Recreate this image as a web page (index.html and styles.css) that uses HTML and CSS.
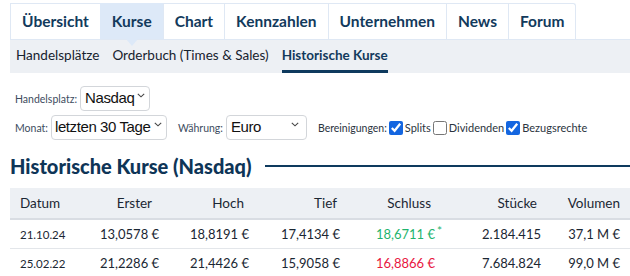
FILE: index.html
```html
<!DOCTYPE html>
<html lang="de">
<head>
    <meta charset="UTF-8">
    <meta name="viewport" content="width=device-width, initial-scale=1.0">
    <title>Historische Kurse</title>
    <link rel="stylesheet" href="styles.css">
</head>
<body>

    <div class="page">
        <ul class="tabs">
            <li><a href="#">Übersicht</a></li>
            <li class="active"><a href="#">Kurse</a></li>
            <li><a href="#">Chart</a></li>
            <li><a href="#">Kennzahlen</a></li>
            <li><a href="#">Unternehmen</a></li>
            <li><a href="#">News</a></li>
            <li><a href="#">Forum</a></li>
        </ul>

        <div class="subnav">
            <a href="#">Handelsplätze</a>
            <a href="#">Orderbuch (Times &amp; Sales)</a>
            <a href="#" class="current">Historische Kurse</a>
        </div>

        <div class="filters">
            <div class="filter-row">
                <label>Handelsplatz:</label>
                <span class="sel sel-platz">
                    <span class="sel-text">Nasdaq</span>
                    <svg class="chev" width="8" height="5" viewBox="0 0 8 5"><path d="M0.8 0.8 L4 3.8 L7.2 0.8" fill="none" stroke="#444" stroke-width="1.1"/></svg>
                </span>
            </div>
            <div class="filter-row">
                <label>Monat:</label>
                <span class="sel sel-monat">
                    <span class="sel-text">letzten 30 Tage</span>
                    <svg class="chev" width="8" height="5" viewBox="0 0 8 5"><path d="M0.8 0.8 L4 3.8 L7.2 0.8" fill="none" stroke="#444" stroke-width="1.1"/></svg>
                </span>
                <label class="gap">Währung:</label>
                <span class="sel sel-euro">
                    <span class="sel-text">Euro</span>
                    <svg class="chev" width="8" height="5" viewBox="0 0 8 5"><path d="M0.8 0.8 L4 3.8 L7.2 0.8" fill="none" stroke="#444" stroke-width="1.1"/></svg>
                </span>
                <span class="bereinigung gap">
                    <span class="b-label">Bereinigungen:</span>
                    <input type="checkbox" id="splits" checked><label for="splits">Splits</label>
                    <input type="checkbox" id="dividenden"><label for="dividenden">Dividenden</label>
                    <input type="checkbox" id="bezug" checked><label for="bezug">Bezugsrechte</label>
                </span>
            </div>
        </div>

        <h2 class="section-title"><span>Historische Kurse (Nasdaq)</span></h2>

        <table class="kurse">
            <colgroup>
                <col class="c-datum">
                <col class="c-erster">
                <col class="c-hoch">
                <col class="c-tief">
                <col class="c-schluss">
                <col class="c-stuecke">
                <col class="c-volumen">
            </colgroup>
            <thead>
                <tr>
                    <th class="left">Datum</th>
                    <th>Erster</th>
                    <th class="hoch">Hoch</th>
                    <th class="tief">Tief</th>
                    <th>Schluss</th>
                    <th>Stücke</th>
                    <th class="last">Volumen</th>
                </tr>
            </thead>
            <tbody>
                <tr>
                    <td class="datum">21.10.24</td>
                    <td>13,0578 €</td>
                    <td>18,8191 €</td>
                    <td>17,4134 €</td>
                    <td class="up">18,6711 €<span class="star">*</span></td>
                    <td>2.184.415</td>
                    <td>37,1 M €</td>
                </tr>
                <tr>
                    <td class="datum">25.02.22</td>
                    <td>21,2286 €</td>
                    <td>21,4426 €</td>
                    <td>15,9058 €</td>
                    <td class="down">16,8866 €</td>
                    <td>7.684.824</td>
                    <td>99,0 M €</td>
                </tr>
            </tbody>
        </table>
    </div>

</body>
</html>
```

FILE: styles.css
```css
body {
    margin: 0;
    font-family: Lato, "Noto Sans", sans-serif;
    color: #1b2733;
    background: #fff;
}
.page {
    padding: 3px 0 0 10px;
    width: 620px;
}

/* Reiter oben */
.tabs {
    list-style: none;
    margin: 0;
    padding: 0;
    display: flex;
}
.tabs li {
    border: 1px solid #dfe8f4;
    border-bottom: none;
    margin-left: -1px;
    position: relative;
}
.tabs li:first-child {
    margin-left: 0;
}
.tabs li:last-child {
    border-radius: 0 3px 0 0;
}
.tabs a {
    display: block;
    height: 35px;
    line-height: 35px;
    padding: 0 11px;
    font-size: 15.5px;
    font-weight: bold;
    color: #123a5c;
    text-decoration: none;
}
.tabs li.active {
    background: #dde9f8;
    border-color: #dde9f8;
}
.tabs li.active::after {
    content: "";
    position: absolute;
    left: 50%;
    bottom: -7px;
    margin-left: -6px;
    border-left: 6px solid transparent;
    border-right: 6px solid transparent;
    border-top: 7px solid #dde9f8;
    z-index: 2;
}

/* Unternavigation */
.subnav {
    background: #edf0f4;
    height: 34px;
    display: flex;
    gap: 13px;
    padding-left: 6px;
    border-top: 1px solid #dfe8f4;
    box-sizing: border-box;
}
.subnav a {
    font-size: 13.5px;
    color: #16222e;
    text-decoration: none;
    line-height: 31px;
    border-bottom: 3px solid transparent;
}
.subnav a.current {
    color: #123a5c;
    font-weight: bold;
    border-bottom-color: #0e3a5e;
}

/* Filter */
.filters {
    padding: 13px 0 0 5px;
}
.filter-row {
    display: flex;
    align-items: center;
    margin-bottom: 4px;
}
.filter-row label,
.b-label {
    font-size: 10.5px;
    color: #3d4c60;
    margin-right: 3px;
}
.filter-row .gap {
    margin-left: 11px;
}
.sel {
    display: flex;
    align-items: center;
    justify-content: space-between;
    box-sizing: border-box;
    height: 25px;
    font-family: "Liberation Sans", Arial, sans-serif;
    font-size: 15px;
    letter-spacing: -0.4px;
    white-space: nowrap;
    color: #111;
    background: #fff;
    border: 1px solid #d3d6da;
    border-radius: 4px;
    padding: 0 7px 2px 4px;
}
.sel .chev {
    margin-top: -4px;
    flex: none;
}
.sel-platz {
    width: 70px;
    padding-right: 4px;
}
.sel-monat {
    width: 116px;
    padding-right: 4px;
    padding-left: 3px;
}
.sel-euro {
    width: 81px;
}
.bereinigung {
    display: flex;
    align-items: center;
}
.bereinigung input {
    margin: 0 2px 0 1px;
    width: 14px;
    height: 14px;
    accent-color: #1466e0;
}
.bereinigung label {
    font-size: 11px;
    color: #2b3440;
    margin-right: 1px;
}
.bereinigung .b-label {
    color: #2b3440;
    margin-right: 1px;
}

/* Ueberschrift */
.section-title {
    display: flex;
    align-items: center;
    margin: 13px 0 9px;
    font-size: 20px;
    font-weight: 900;
    color: #0e3557;
    height: 26px;
}
.section-title::after {
    content: "";
    flex: 1;
    border-top: 2px solid #0e3a5e;
    margin-left: 14px;
}

/* Tabelle */
.kurse {
    width: 620px;
    border-collapse: collapse;
    table-layout: fixed;
}
.c-datum { width: 90px; }
.c-erster { width: 56px; }
.c-hoch { width: 93px; }
.c-tief { width: 91px; }
.c-schluss { width: 95px; }
.c-stuecke { width: 106px; }
.c-volumen { width: 89px; }
.kurse th {
    background: #edf0f4;
    font-weight: normal;
    font-size: 13.5px;
    color: #1b2733;
    height: 30px;
    text-align: right;
    padding: 0 4px 0 0;
    border-bottom: 2px solid #d9dde3;
}
.kurse th.left {
    text-align: left;
    padding-left: 10px;
}
.kurse th.hoch {
    padding-right: 5px;
}
.kurse th.tief {
    padding-right: 3px;
}
.kurse th.last {
    padding-right: 10px;
}
.kurse td {
    height: 28px;
    font-size: 13px;
    text-align: right;
    padding: 0;
    border-bottom: 1px solid #e3e6ea;
    color: #1b2733;
    white-space: nowrap;
}
.kurse td:last-child {
    padding-right: 10px;
}
.kurse td.datum {
    text-align: left;
    padding-left: 10px;
    font-size: 11.5px;
}
.kurse td.up {
    color: #1fb46e;
    position: relative;
}
.kurse td.down {
    color: #e8163f;
}
.star {
    position: absolute;
    margin-left: 2px;
    margin-top: -3px;
    font-size: 12px;
}
```
